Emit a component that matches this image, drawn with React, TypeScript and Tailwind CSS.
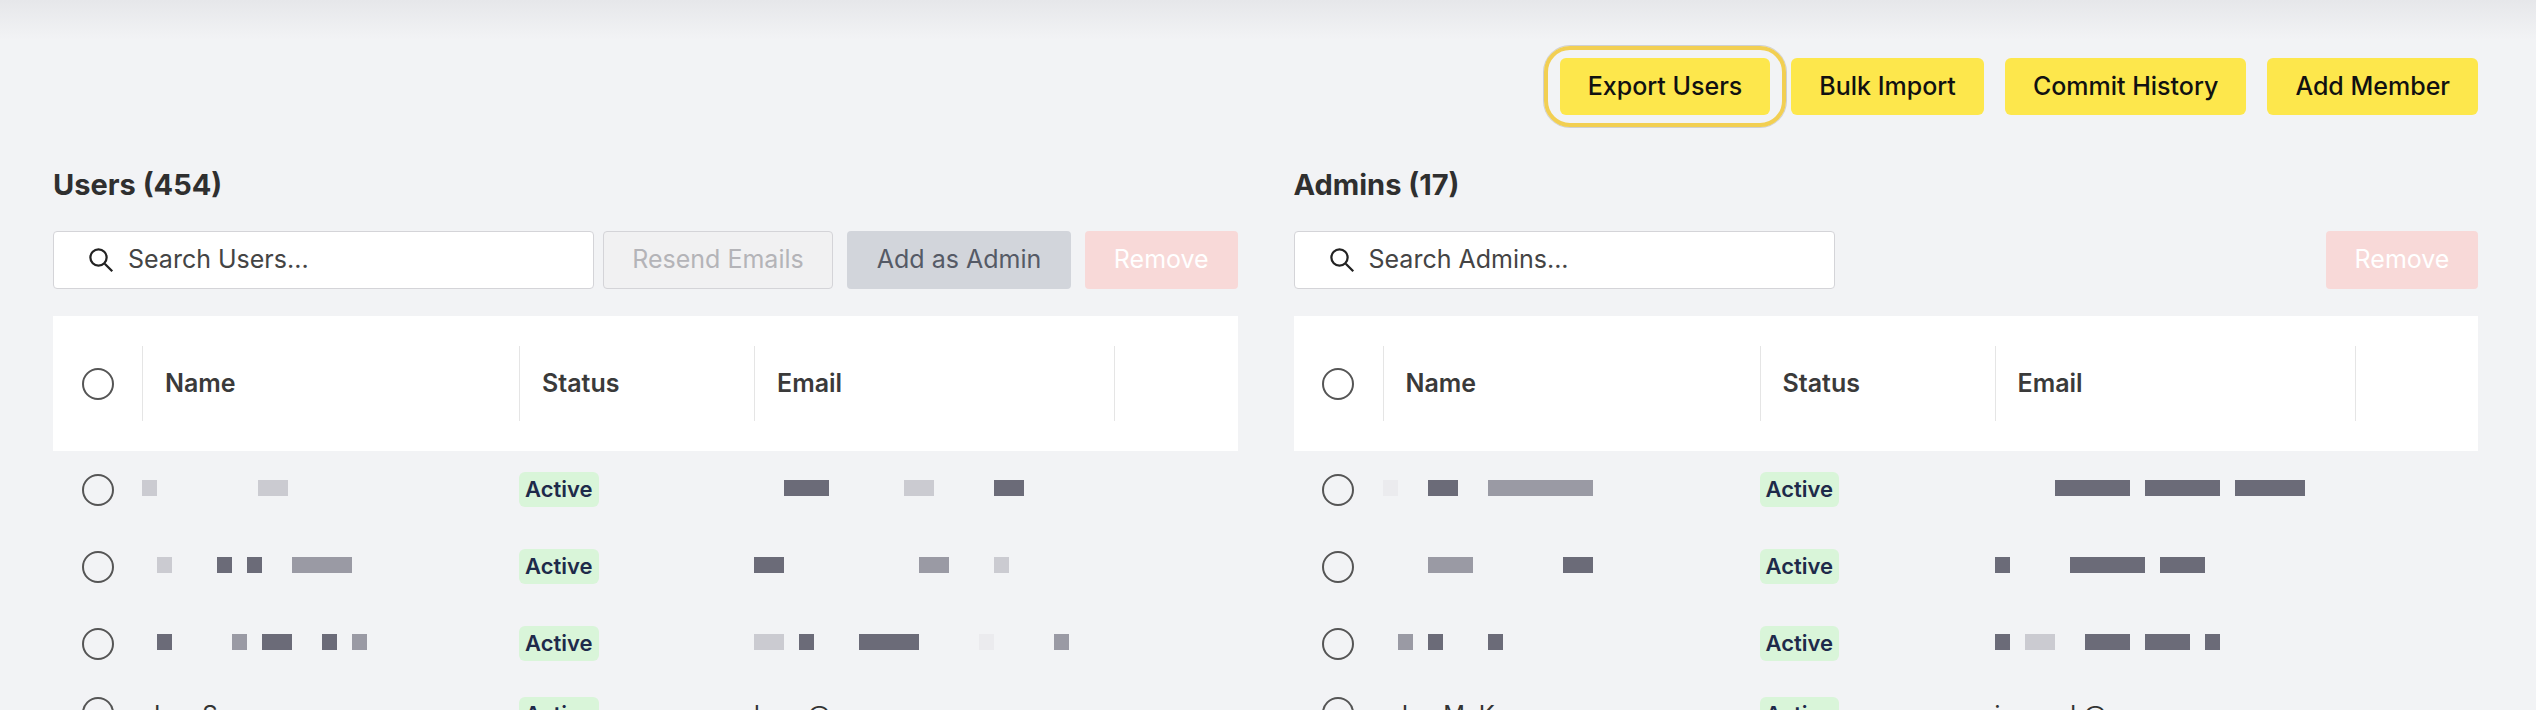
import React from "react";

type Blk = [number, number, string];
const S = () => (
  <svg width="30" height="30" viewBox="0 0 24 24" fill="none" stroke="#222" strokeWidth="1.8"><circle cx="10" cy="10" r="6.5" /><path d="M15 15l6 6" /></svg>
);

function Pix({ blocks }: { blocks: Blk[] }) {
  return (
    <div className="relative h-[20px]">
      {blocks.map((b, i) => (
        <div key={i} className="absolute top-0 h-[16px]" style={{ left: b[0], width: b[1], background: b[2] }} />
      ))}
    </div>
  );
}

const D = "#6b6b78", M = "#9a9aa4", L = "#cbcbd1", X = "#ebebee";

function Circle() {
  return <div className="w-[32px] h-[32px] rounded-full border-2 border-[#555]" />;
}

const badge = "inline-block bg-[#d9f5d9] text-[#1e2a4a] text-[22px] font-semibold rounded-[6px] px-[6px] py-[4px] leading-[27px]";

function Table({ rows, last }: { rows: { n: Blk[]; e: Blk[] }[]; last: [string, string] }) {
  return (
    <div>
      <div className="bg-white h-[135px] flex items-center text-[25px] font-semibold text-[#3a3a3a]">
        <div className="w-[89px] flex justify-center"><Circle /></div>
        <div className="w-[377px] h-[75px] border-l border-[#e5e5e5] flex items-center pl-[22px]">Name</div>
        <div className="w-[235px] h-[75px] border-l border-[#e5e5e5] flex items-center pl-[22px]">Status</div>
        <div className="w-[360px] h-[75px] border-l border-[#e5e5e5] flex items-center pl-[22px]">Email</div>
        <div className="flex-1 h-[75px] border-l border-[#e5e5e5]" />
      </div>
      {rows.map((r, i) => (
        <div key={i} className="h-[77px] flex items-center">
          <div className="w-[89px] flex justify-center"><Circle /></div>
          <div className="w-[377px]"><Pix blocks={r.n} /></div>
          <div className="w-[235px]"><span className={badge}>Active</span></div>
          <div className="w-[360px]"><Pix blocks={r.e} /></div>
        </div>
      ))}
      <div className="h-[77px] flex items-start pt-[15px] overflow-hidden">
        <div className="w-[89px] flex justify-center"><Circle /></div>
        <div className="w-[377px] text-[24px] text-[#333] pl-[12px]">{last[0]}</div>
        <div className="w-[235px]"><span className={badge}>Active</span></div>
        <div className="text-[24px] text-[#333]">{last[1]}</div>
      </div>
    </div>
  );
}

export default function App() {
  const uRows = [
    { n: [[0, 15, L], [116, 30, L]] as Blk[], e: [[30, 45, D], [150, 30, L], [240, 30, D]] as Blk[] },
    { n: [[15, 15, L], [75, 15, D], [105, 15, D], [150, 60, M]] as Blk[], e: [[0, 30, D], [165, 30, M], [240, 15, L]] as Blk[] },
    { n: [[15, 15, D], [90, 15, M], [120, 30, D], [180, 15, D], [210, 15, M]] as Blk[], e: [[0, 30, L], [45, 15, D], [105, 60, D], [225, 15, X], [300, 15, M]] as Blk[] },
  ];
  const aRows = [
    { n: [[0, 15, X], [45, 30, D], [105, 105, M]] as Blk[], e: [[60, 75, D], [150, 75, D], [240, 70, D]] as Blk[] },
    { n: [[45, 45, M], [180, 30, D]] as Blk[], e: [[0, 15, D], [75, 75, D], [165, 45, D]] as Blk[] },
    { n: [[15, 15, M], [45, 15, D], [105, 15, D]] as Blk[], e: [[0, 15, D], [30, 30, L], [90, 45, D], [150, 45, D], [210, 15, D]] as Blk[] },
  ];
  const btn = "h-[57px] px-[28px] rounded-[6px] bg-[#fde74c] text-[25px] font-medium text-[#111] flex items-center";
  return (
    <div className="w-[2536px] h-[710px] overflow-hidden bg-[#f2f3f5] relative" style={{ fontFamily: "Inter, 'Noto Sans', sans-serif" }}>
      <div className="absolute top-0 left-0 right-0 h-[40px] bg-gradient-to-b from-[#e6e7ea] to-transparent" />
      <div className="relative flex justify-end gap-[21px] pr-[58px] pt-[58px]">
        <div className="relative">
          <div className="absolute -inset-x-[16px] -inset-y-[12px] rounded-[26px] border-[4px] border-[#f2cf52] shadow-[0_0_0_1px_#d0d0d0]" />
          <button className={btn}>Export Users</button>
        </div>
        <button className={btn}>Bulk Import</button>
        <button className={btn}>Commit History</button>
        <button className={btn}>Add Member</button>
      </div>
      <div className="relative flex gap-[56px] px-[53px] pt-[55px] pr-[58px]">
        <div className="flex-1">
          <h2 className="text-[29px] font-bold text-[#2f2f2f] leading-none mb-[32px]">Users (454)</h2>
          <div className="flex gap-[9px] mb-[27px] h-[58px]">
            <div className="w-[541px] bg-white border border-[#d4d4d8] rounded-[4px] flex items-center gap-[12px] pl-[32px] text-[25px] text-[#444]"><S />Search Users...</div>
            <div className="w-[230px] bg-[#f1f1f2] border border-[#d4d4d8] rounded-[4px] flex items-center justify-center text-[25px] text-[#b4b4b8]">Resend Emails</div>
            <div className="ml-[5px] w-[224px] bg-[#d2d5db] rounded-[4px] flex items-center justify-center text-[25px] text-[#555a66]">Add as Admin</div>
            <div className="ml-[5px] flex-1 bg-[#f8d9d8] rounded-[4px] flex items-center justify-center text-[25px] text-white">Remove</div>
          </div>
          <Table rows={uRows} last={["Lee S", "lee.s@company.com"]} />
        </div>
        <div className="flex-1">
          <h2 className="text-[29px] font-bold text-[#2f2f2f] leading-none mb-[32px]">Admins (17)</h2>
          <div className="flex justify-between mb-[27px] h-[58px]">
            <div className="w-[541px] bg-white border border-[#d4d4d8] rounded-[4px] flex items-center gap-[12px] pl-[32px] text-[25px] text-[#444]"><S />Search Admins...</div>
            <div className="w-[152px] bg-[#f8d9d8] rounded-[4px] flex items-center justify-center text-[25px] text-white">Remove</div>
          </div>
          <Table rows={aRows} last={["Joe McK", "joe.mck@company.com"]} />
        </div>
      </div>
    </div>
  );
}
